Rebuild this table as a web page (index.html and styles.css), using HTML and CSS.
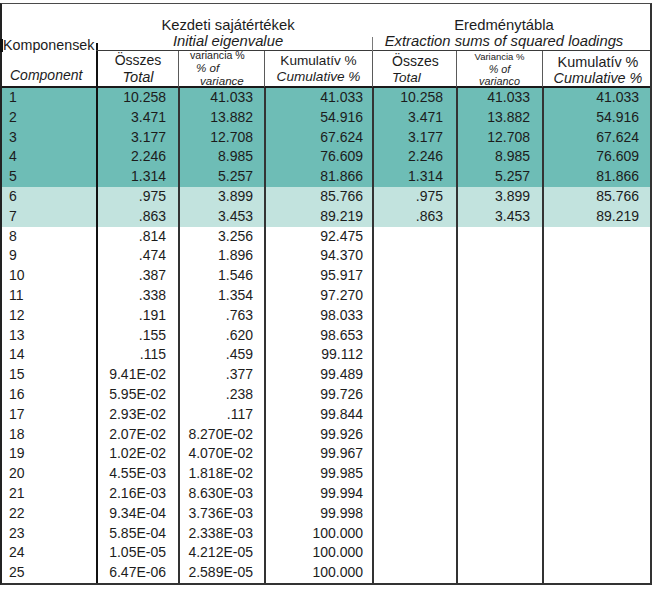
FILE: index.html
```html
<!DOCTYPE html>
<html lang="hu">
<head>
<meta charset="utf-8">
<title>Komponensek</title>
<link rel="stylesheet" href="styles.css">
</head>
<body>
<div class="tbl">
  <div class="head">
    <div class="comp-h">
      <span class="kh">Komponensek</span>
      <span class="ce">Component</span>
    </div>
    <div class="grp grp-a">
      <span class="g1">Kezdeti sajátértékek</span>
      <span class="g2">Initial eigenvalue</span>
    </div>
    <div class="grp grp-b">
      <span class="g1">Eredménytábla</span>
      <span class="g2">Extraction sums of squared loadings</span>
    </div>
    <div class="sub s1">
      <span class="t14">Összes</span>
      <span class="t148 it">Total</span>
    </div>
    <div class="sub s2">
      <span class="sm l1">variancia %</span>
      <span class="md it l2">% of</span>
      <span class="md it l3">variance</span>
    </div>
    <div class="sub s3">
      <span class="k13">Kumulatív %</span>
      <span class="k13 it">Cumulative %</span>
    </div>
    <div class="sub s4">
      <span class="t14">Összes</span>
      <span class="t135 it">Total</span>
    </div>
    <div class="sub s5">
      <span class="xs">Variancia %</span>
      <span class="xm it">% of</span>
      <span class="xm it">varianco</span>
    </div>
    <div class="sub s6">
      <span class="k145">Kumulatív %</span>
      <span class="k145 it">Cumulative %</span>
    </div>
  </div>

  <div class="row dark"><div class="c c0">1</div><div class="c c1">10.258</div><div class="c c2">41.033</div><div class="c c3">41.033</div><div class="c c4">10.258</div><div class="c c5">41.033</div><div class="c c6">41.033</div></div>
  <div class="row dark"><div class="c c0">2</div><div class="c c1">3.471</div><div class="c c2">13.882</div><div class="c c3">54.916</div><div class="c c4">3.471</div><div class="c c5">13.882</div><div class="c c6">54.916</div></div>
  <div class="row dark"><div class="c c0">3</div><div class="c c1">3.177</div><div class="c c2">12.708</div><div class="c c3">67.624</div><div class="c c4">3.177</div><div class="c c5">12.708</div><div class="c c6">67.624</div></div>
  <div class="row dark"><div class="c c0">4</div><div class="c c1">2.246</div><div class="c c2">8.985</div><div class="c c3">76.609</div><div class="c c4">2.246</div><div class="c c5">8.985</div><div class="c c6">76.609</div></div>
  <div class="row dark"><div class="c c0">5</div><div class="c c1">1.314</div><div class="c c2">5.257</div><div class="c c3">81.866</div><div class="c c4">1.314</div><div class="c c5">5.257</div><div class="c c6">81.866</div></div>
  <div class="row light"><div class="c c0">6</div><div class="c c1">.975</div><div class="c c2">3.899</div><div class="c c3">85.766</div><div class="c c4">.975</div><div class="c c5">3.899</div><div class="c c6">85.766</div></div>
  <div class="row light"><div class="c c0">7</div><div class="c c1">.863</div><div class="c c2">3.453</div><div class="c c3">89.219</div><div class="c c4">.863</div><div class="c c5">3.453</div><div class="c c6">89.219</div></div>
  <div class="row"><div class="c c0">8</div><div class="c c1">.814</div><div class="c c2">3.256</div><div class="c c3">92.475</div><div class="c c4"></div><div class="c c5"></div><div class="c c6"></div></div>
  <div class="row"><div class="c c0">9</div><div class="c c1">.474</div><div class="c c2">1.896</div><div class="c c3">94.370</div><div class="c c4"></div><div class="c c5"></div><div class="c c6"></div></div>
  <div class="row"><div class="c c0">10</div><div class="c c1">.387</div><div class="c c2">1.546</div><div class="c c3">95.917</div><div class="c c4"></div><div class="c c5"></div><div class="c c6"></div></div>
  <div class="row"><div class="c c0">11</div><div class="c c1">.338</div><div class="c c2">1.354</div><div class="c c3">97.270</div><div class="c c4"></div><div class="c c5"></div><div class="c c6"></div></div>
  <div class="row"><div class="c c0">12</div><div class="c c1">.191</div><div class="c c2">.763</div><div class="c c3">98.033</div><div class="c c4"></div><div class="c c5"></div><div class="c c6"></div></div>
  <div class="row"><div class="c c0">13</div><div class="c c1">.155</div><div class="c c2">.620</div><div class="c c3">98.653</div><div class="c c4"></div><div class="c c5"></div><div class="c c6"></div></div>
  <div class="row"><div class="c c0">14</div><div class="c c1">.115</div><div class="c c2">.459</div><div class="c c3">99.112</div><div class="c c4"></div><div class="c c5"></div><div class="c c6"></div></div>
  <div class="row"><div class="c c0">15</div><div class="c c1">9.41E-02</div><div class="c c2">.377</div><div class="c c3">99.489</div><div class="c c4"></div><div class="c c5"></div><div class="c c6"></div></div>
  <div class="row"><div class="c c0">16</div><div class="c c1">5.95E-02</div><div class="c c2">.238</div><div class="c c3">99.726</div><div class="c c4"></div><div class="c c5"></div><div class="c c6"></div></div>
  <div class="row"><div class="c c0">17</div><div class="c c1">2.93E-02</div><div class="c c2">.117</div><div class="c c3">99.844</div><div class="c c4"></div><div class="c c5"></div><div class="c c6"></div></div>
  <div class="row"><div class="c c0">18</div><div class="c c1">2.07E-02</div><div class="c c2">8.270E-02</div><div class="c c3">99.926</div><div class="c c4"></div><div class="c c5"></div><div class="c c6"></div></div>
  <div class="row"><div class="c c0">19</div><div class="c c1">1.02E-02</div><div class="c c2">4.070E-02</div><div class="c c3">99.967</div><div class="c c4"></div><div class="c c5"></div><div class="c c6"></div></div>
  <div class="row"><div class="c c0">20</div><div class="c c1">4.55E-03</div><div class="c c2">1.818E-02</div><div class="c c3">99.985</div><div class="c c4"></div><div class="c c5"></div><div class="c c6"></div></div>
  <div class="row"><div class="c c0">21</div><div class="c c1">2.16E-03</div><div class="c c2">8.630E-03</div><div class="c c3">99.994</div><div class="c c4"></div><div class="c c5"></div><div class="c c6"></div></div>
  <div class="row"><div class="c c0">22</div><div class="c c1">9.34E-04</div><div class="c c2">3.736E-03</div><div class="c c3">99.998</div><div class="c c4"></div><div class="c c5"></div><div class="c c6"></div></div>
  <div class="row"><div class="c c0">23</div><div class="c c1">5.85E-04</div><div class="c c2">2.338E-03</div><div class="c c3">100.000</div><div class="c c4"></div><div class="c c5"></div><div class="c c6"></div></div>
  <div class="row"><div class="c c0">24</div><div class="c c1">1.05E-05</div><div class="c c2">4.212E-05</div><div class="c c3">100.000</div><div class="c c4"></div><div class="c c5"></div><div class="c c6"></div></div>
  <div class="row"><div class="c c0">25</div><div class="c c1">6.47E-06</div><div class="c c2">2.589E-05</div><div class="c c3">100.000</div><div class="c c4"></div><div class="c c5"></div><div class="c c6"></div></div>
</div>
</body>
</html>
```

FILE: styles.css
```css
html, body {
  margin: 0;
  padding: 0;
  background: #ffffff;
}

body {
  font-family: "Liberation Sans", Arial, sans-serif;
  color: #1c1c1c;
}

.tbl {
  margin-top: 3px;
  width: 648px;
  border-top: 1px solid #4a4a4a;
  border-left: 2px solid #222;
  border-right: 2px solid #333;
  border-bottom: 2px solid #333;
}

.head {
  display: grid;
  grid-template-columns: 94px 82px 86px 108px 84px 86px 108px;
  grid-template-rows: 47px 37px;
}

.comp-h {
  grid-column: 1;
  grid-row: 1 / 3;
  position: relative;
  border-bottom: 2px solid #1a1a1a;
  display: flex;
  flex-direction: column;
  font-size: 14.3px;
}

.comp-h::before {
  content: "";
  position: absolute;
  left: -2px;
  top: 35px;
  width: 3px;
  height: 13px;
  background: #111;
}

.comp-h::after {
  content: "";
  position: absolute;
  right: -2px;
  top: 39px;
  bottom: -2px;
  width: 2px;
  background: #111;
}

.kh {
  display: block;
  margin-top: 33px;
  margin-left: 1px;
  line-height: 16px;
}

.ce {
  display: block;
  margin-top: 14px;
  margin-left: 8px;
  line-height: 16px;
  font-style: italic;
  font-size: 14px;
}

.grp {
  grid-row: 1;
  position: relative;
  border-bottom: 1px solid #3a3a3a;
  display: flex;
  flex-direction: column;
  justify-content: flex-end;
  align-items: center;
  padding-bottom: 0;
  padding-right: 12px;
  font-size: 14.8px;
  line-height: 1.12;
}

.grp-a {
  grid-column: 2 / 5;
}

.grp-b {
  grid-column: 5 / 8;
  padding-right: 14px;
}

.grp-b::before {
  content: "";
  position: absolute;
  left: 0;
  top: 33px;
  bottom: -1px;
  width: 1px;
  background: #7a7a7a;
}

.g2 {
  font-style: italic;
}

.sub {
  grid-row: 2;
  border-left: 1px solid #5a5a5a;
  border-bottom: 2px solid #1a1a1a;
  display: flex;
  flex-direction: column;
  justify-content: center;
  align-items: center;
}

.sub span {
  line-height: 1.12;
  white-space: nowrap;
}

.s1 {
  grid-column: 2;
  border-left: 2px solid #111;
  padding-top: 2px;
}

.s2 {
  grid-column: 3;
  align-items: flex-start;
}

.s3 {
  grid-column: 4;
}

.s4 {
  grid-column: 5;
  align-items: flex-start;
  padding-left: 19px;
  padding-top: 2px;
}

.s5 {
  grid-column: 6;
  padding-top: 2px;
}

.s6 {
  grid-column: 7;
  padding-left: 3px;
  padding-top: 3px;
}

.it {
  font-style: italic;
}

.t14 {
  font-size: 14px;
}

.t148 {
  font-size: 14.6px;
}

.t135 {
  font-size: 13.5px;
}

.sm {
  font-size: 10.6px;
}

.md {
  font-size: 11.6px;
}

.l1 { margin-left: 11px; }
.l2 { margin-left: 17px; }
.l3 { margin-left: 21px; }

.xs {
  font-size: 9.5px;
}

.xm {
  font-size: 10.8px;
}

.k13 {
  font-size: 13.6px;
}

.k145 {
  font-size: 14.4px;
}

.row {
  display: grid;
  grid-template-columns: 94px 82px 86px 108px 84px 86px 108px;
  height: 19.8px;
  font-size: 14px;
  line-height: 19.8px;
}

.row.dark {
  background: #6ebdb6;
}

.row.light {
  background: #c2e3de;
}

.c {
  text-align: right;
  white-space: nowrap;
  border-left: 2px solid #333;
}

.c0 {
  border-left: none;
  text-align: left;
  padding-left: 7px;
  line-height: 18.8px;
}

.c1 { border-left-color: #111; padding-right: 12px; }
.c2 { padding-right: 11px; }
.c3 { padding-right: 9px; }
.c4 { padding-right: 13px; }
.c5 { padding-right: 12px; }
.c6 { padding-right: 11px; }
```
